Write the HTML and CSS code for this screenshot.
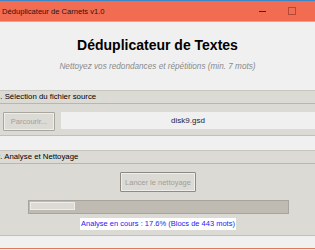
FILE: index.html
```html
<!DOCTYPE html>
<html lang="fr">
<head>
    <meta charset="UTF-8">
    <meta name="viewport" content="width=device-width, initial-scale=1.0">
    <title>Déduplicateur de Carnets v1.0</title>
    <link rel="stylesheet" href="styles.css">
</head>
<body>
<div class="window">
    <div class="top-strip"></div>
    <div class="titlebar">
        <span class="title">Déduplicateur de Carnets v1.0</span>
        <div class="controls">
            <span class="btn-min"></span>
            <span class="btn-max"></span>
        </div>
    </div>

    <div class="intro">
        <h1>Déduplicateur de Textes</h1>
        <p class="subtitle">Nettoyez vos redondances et répétitions (min. 7 mots)</p>
    </div>

    <div class="section">
        <div class="section-title">1. Sélection du fichier source</div>
        <div class="section-body file-row">
            <button class="tk-button" disabled>Parcourir...</button>
            <div class="entry">disk9.gsd</div>
        </div>
    </div>

    <div class="section section-last">
        <div class="section-title">2. Analyse et Nettoyage</div>
        <div class="section-body run-body">
            <button class="tk-button run-button" disabled>Lancer le nettoyage</button>
            <div class="progress">
                <div class="progress-fill" style="width: 17.6%;"></div>
            </div>
            <div class="status">Analyse en cours : 17.6% (Blocs de 443 mots)</div>
        </div>
    </div>

    <div class="bottom-gap"></div>
    <div class="bottom-line"></div>
</div>
</body>
</html>
```

FILE: styles.css
```css
/* CSS styles */
body {
    margin: 0;
    font-family: "Liberation Sans", Arial, sans-serif;
    background-color: #f0f0f0;
}
.window {
    width: 315px;
    height: 250px;
    overflow: hidden;
    display: flex;
    flex-direction: column;
}
.top-strip {
    height: 1px;
    background-color: #3d86c6;
}
.titlebar {
    height: 20px;
    background-color: #f26c51;
    border-bottom: 1px solid #f59c88;
    display: flex;
    align-items: center;
    justify-content: space-between;
}
.title {
    font-size: 7.6px;
    color: #2a1410;
    padding-left: 2px;
}
.controls {
    display: flex;
    align-items: center;
    gap: 22px;
    padding-right: 19px;
}
.btn-min {
    width: 7px;
    height: 1px;
    background-color: #5a1c10;
}
.btn-max {
    width: 6px;
    height: 6px;
    border: 1px solid #b24a36;
}
.intro {
    text-align: center;
    height: 68px;
}
h1 {
    margin: 15px 0 0;
    font-size: 14px;
    font-weight: bold;
    color: #000;
    line-height: 17px;
}
.subtitle {
    margin: 8px 0 0;
    font-size: 8.2px;
    font-style: italic;
    color: #8a8a8a;
}
.section {
    margin-bottom: 14px;
}
.section-title {
    height: 12px;
    line-height: 12px;
    font-size: 7.8px;
    color: #000;
    background-color: #dcdad5;
    border-top: 1px solid #c9c6bf;
    border-bottom: 1px solid #b9b6ae;
    box-shadow: 0 1px 0 #ecebe8;
    text-indent: -4px;
    white-space: nowrap;
}
.section-body {
    background-color: #dcdad5;
    border-bottom: 1px solid #c2bfb8;
}
.file-row {
    height: 31px;
    display: flex;
    align-items: center;
    gap: 6px;
    padding-left: 3px;
}
.tk-button {
    font-family: "Liberation Sans", Arial, sans-serif;
    font-size: 7.5px;
    color: #a29f98;
    background-color: #dcdad5;
    border: 1px solid #a9a69f;
    box-shadow: inset 0 0 0 1px #eeede9;
    border-radius: 1px;
    padding: 0;
}
.file-row .tk-button {
    width: 52px;
    height: 19px;
    margin-top: 3px;
}
.entry {
    flex: 1;
    height: 17px;
    line-height: 17px;
    margin-top: 1px;
    background-color: #f0f0f0;
    text-align: center;
    font-size: 8px;
    color: #1a1a40;
}
.section-last {
    margin-bottom: 0;
}
.run-body {
    height: 71px;
    display: flex;
    flex-direction: column;
    align-items: center;
}
.run-button {
    width: 76px;
    height: 20px;
    margin-top: 8px;
    margin-left: 1px;
    border-color: #8e8b85;
}
.progress {
    width: 257px;
    height: 10px;
    margin-top: 8px;
    margin-left: 1px;
    background-color: #bfbbb2;
    border: 1px solid #a8a49c;
    padding: 1px;
    display: flex;
}
.progress-fill {
    height: 8px;
    background-color: #dcdad5;
    border: 1px solid #eeede9;
    box-sizing: border-box;
}
.status {
    margin-top: 4px;
    margin-left: 1px;
    background-color: #fff;
    color: #2323ee;
    font-size: 7.5px;
    height: 12px;
    line-height: 12px;
    padding: 0 1px;
}
.bottom-gap {
    flex: 1;
    background-color: #f0f0f0;
}
.bottom-line {
    height: 1px;
    background-color: #e0775f;
    margin-bottom: 1px;
}
```
